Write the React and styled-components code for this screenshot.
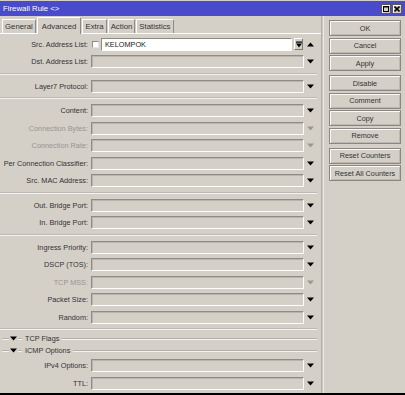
import styled, { createGlobalStyle } from "styled-components";

const GlobalStyle = createGlobalStyle`
  html, body {
    margin: 0;
    padding: 0;
    background: #d4d0c8;
  }
  * {
    box-sizing: border-box;
  }
`;

const rows = [
  { type: "src" },
  { label: "Dst. Address List:" },
  { type: "sep" },
  { label: "Layer7 Protocol:" },
  { type: "sep" },
  { label: "Content:" },
  { label: "Connection Bytes:", disabled: true },
  { label: "Connection Rate:", disabled: true },
  { label: "Per Connection Classifier:" },
  { label: "Src. MAC Address:" },
  { type: "sep" },
  { label: "Out. Bridge Port:" },
  { label: "In. Bridge Port:" },
  { type: "sep" },
  { label: "Ingress Priority:" },
  { label: "DSCP (TOS):" },
  { label: "TCP MSS:", disabled: true },
  { label: "Packet Size:" },
  { label: "Random:" },
  { type: "sep" },
  { type: "head", label: "TCP Flags" },
  { type: "head", label: "ICMP Options" },
  { label: "IPv4 Options:" },
  { label: "TTL:" },
];

const tabs = ["General", "Advanced", "Extra", "Action", "Statistics"];

const buttonGroups = [
  ["OK", "Cancel", "Apply"],
  ["Disable", "Comment", "Copy", "Remove"],
  ["Reset Counters", "Reset All Counters"],
];

const Triangle = ({ up, disabled }) => (
  <svg width="7" height="5" viewBox="0 0 7 5">
    <path
      d={up ? "M0 4.5 L3.5 0.5 L7 4.5 Z" : "M0 0.5 L7 0.5 L3.5 4.5 Z"}
      fill={disabled ? "#9a9893" : "#000"}
    />
  </svg>
);

const ToggleIcon = () => (
  <svg width="6" height="7" viewBox="0 0 6 7">
    <rect x="0" y="0.5" width="6" height="1.2" fill="#000" />
    <path d="M0 2.5 L6 2.5 L3 6.5 Z" fill="#000" />
  </svg>
);

const App = () => {
  return (
    <Window>
      <GlobalStyle />
      <TitleBar>
        <span>Firewall Rule &lt;&gt;</span>
        <TitleButtons>
          <TitleButton>
            <svg width="6" height="6" viewBox="0 0 6 6">
              <rect x="0.5" y="0.5" width="5" height="5" fill="none" stroke="#000" />
              <rect x="0" y="0" width="6" height="1.5" fill="#000" />
            </svg>
          </TitleButton>
          <TitleButton>
            <svg width="6" height="6" viewBox="0 0 6 6">
              <path d="M0.5 0.5 L5.5 5.5 M5.5 0.5 L0.5 5.5" stroke="#000" strokeWidth="1.6" />
            </svg>
          </TitleButton>
        </TitleButtons>
      </TitleBar>
      <Main>
        <LeftPane>
          <TabBar>
            {tabs.map((t) => (
              <Tab key={t} $active={t === "Advanced"}>
                {t}
              </Tab>
            ))}
          </TabBar>
          <Form>
            {rows.map((r, i) => {
              if (r.type === "sep") return <Separator key={i} />;
              if (r.type === "head")
                return (
                  <Header key={i}>
                    <Groove $w="7px" />
                    <Triangle />
                    <Groove $w="4px" />
                    <HeaderText>{r.label}</HeaderText>
                    <Groove />
                  </Header>
                );
              if (r.type === "src")
                return (
                  <Row key={i}>
                    <Label>Src. Address List:</Label>
                    <SrcField>
                      <CheckBox />
                      <WhiteInput>KELOMPOK</WhiteInput>
                      <SmallButton>
                        <ToggleIcon />
                      </SmallButton>
                    </SrcField>
                    <ArrowCell>
                      <Triangle up />
                    </ArrowCell>
                  </Row>
                );
              return (
                <Row key={i}>
                  <Label $disabled={r.disabled}>{r.label}</Label>
                  <Input />
                  <ArrowCell>
                    <Triangle disabled={r.disabled} />
                  </ArrowCell>
                </Row>
              );
            })}
          </Form>
        </LeftPane>
        <Divider />
        <Side>
          {buttonGroups.map((g, gi) => (
            <ButtonGroup key={gi}>
              {g.map((b) => (
                <Button key={b}>{b}</Button>
              ))}
            </ButtonGroup>
          ))}
        </Side>
      </Main>
    </Window>
  );
};

export default App;

const Window = styled.div`
  width: 405px;
  height: 395px;
  display: flex;
  flex-direction: column;
  background: #d4d0c8;
  border-bottom: 2px solid #000;
  font-family: "Liberation Sans", Arial, sans-serif;
  font-size: 7.3px;
  color: #333;
  overflow: hidden;
`;

const TitleBar = styled.div`
  height: 15px;
  margin-top: 1px;
  background: #4a4bca;
  color: #fff;
  display: flex;
  align-items: center;
  justify-content: space-between;
  padding: 0 3px 0 3px;
  font-size: 7.8px;
`;

const TitleButtons = styled.div`
  display: flex;
  gap: 1px;
`;

const TitleButton = styled.div`
  width: 10px;
  height: 10px;
  background: #d4d0c8;
  border: 1px solid #5a5a5a;
  box-shadow: inset 1px 1px 0 #fff;
  display: flex;
  align-items: center;
  justify-content: center;
`;

const Main = styled.div`
  flex: 1;
  display: flex;
`;

const LeftPane = styled.div`
  width: 321px;
  display: flex;
  flex-direction: column;
`;

const TabBar = styled.div`
  height: 17px;
  display: flex;
  align-items: flex-end;
  padding-left: 2px;
  position: relative;
  z-index: 1;
`;

const Tab = styled.div`
  height: ${(p) => (p.$active ? "17px" : "14px")};
  padding: 0 ${(p) => (p.$active ? "4px" : "2px")};
  margin-bottom: ${(p) => (p.$active ? "-1px" : "0")};
  margin-right: 1px;
  display: flex;
  align-items: center;
  background: #d4d0c8;
  border-top: 1px solid #fff;
  border-left: 1px solid #fff;
  border-right: 1px solid #8e8b85;
  border-radius: 1px 1px 0 0;
  font-size: 7.8px;
  color: #333;
`;

const Form = styled.div`
  border-top: 1px solid #fff;
  padding-top: 1.25px;
  display: flex;
  flex-direction: column;
`;

const Row = styled.div`
  height: 17.5px;
  display: grid;
  grid-template-columns: 91px 213px 13px;
  align-items: center;
`;

const Label = styled.div`
  text-align: right;
  padding-right: 3px;
  white-space: nowrap;
  color: ${(p) => (p.$disabled ? "#979591" : "#333")};
`;

const Input = styled.div`
  height: 13px;
  border: 1px solid;
  border-color: #8f8c86 #fdfdfd #fdfdfd #8f8c86;
  box-shadow: inset 1px 1px 0 #b9b5ae;
`;

const SrcField = styled.div`
  display: flex;
  align-items: center;
  gap: 2px;
  padding-left: 1px;
`;

const CheckBox = styled.div`
  width: 7px;
  height: 7px;
  background: #fff;
  border: 1px solid;
  border-color: #8f8c86 #e8e6e1 #e8e6e1 #8f8c86;
`;

const WhiteInput = styled.div`
  flex: 1;
  height: 13px;
  background: #fff;
  border: 1px solid;
  border-color: #8f8c86 #fdfdfd #fdfdfd #8f8c86;
  padding-left: 3px;
  display: flex;
  align-items: center;
  color: #222;
`;

const SmallButton = styled.div`
  width: 9px;
  height: 12px;
  margin-right: 1px;
  border: 1px solid;
  border-color: #fff #7d7a74 #7d7a74 #fff;
  display: flex;
  align-items: center;
  justify-content: center;
`;

const ArrowCell = styled.div`
  display: flex;
  justify-content: center;
  align-items: center;
`;

const Separator = styled.div`
  height: 7px;
  width: 317px;
  display: flex;
  align-items: center;
  &::before {
    content: "";
    flex: 1;
    height: 0;
    border-top: 1px solid #bdb9b2;
    border-bottom: 1px solid #f4f3f0;
  }
`;

const Header = styled.div`
  height: 12px;
  width: 317px;
  display: flex;
  align-items: center;
  gap: 1px;
  padding-left: 2px;
`;

const Groove = styled.div`
  height: 0;
  border-top: 1px solid #b3afa8;
  border-bottom: 1px solid #f4f3f0;
  ${(p) => (p.$w ? `width: ${p.$w};` : "flex: 1;")}
`;

const HeaderText = styled.span`
  padding: 0 2px;
  white-space: nowrap;
`;

const Divider = styled.div`
  width: 3px;
  border-left: 1px solid #b3afa8;
  border-right: 1px solid #ebe9e5;
  background: #cdc9c1;
`;

const Side = styled.div`
  flex: 1;
  padding: 4.3px 0 0 5px;
  display: flex;
  flex-direction: column;
  gap: 4px;
`;

const ButtonGroup = styled.div`
  display: flex;
  flex-direction: column;
  gap: 1.5px;
`;

const Button = styled.div`
  width: 72px;
  height: 16px;
  display: flex;
  align-items: center;
  justify-content: center;
  border: 1px solid #8a8780;
  box-shadow: inset 1px 1px 0 #fbfaf8, inset -1px -1px 0 #bdb9b2;
  color: #333;
  white-space: nowrap;
`;
